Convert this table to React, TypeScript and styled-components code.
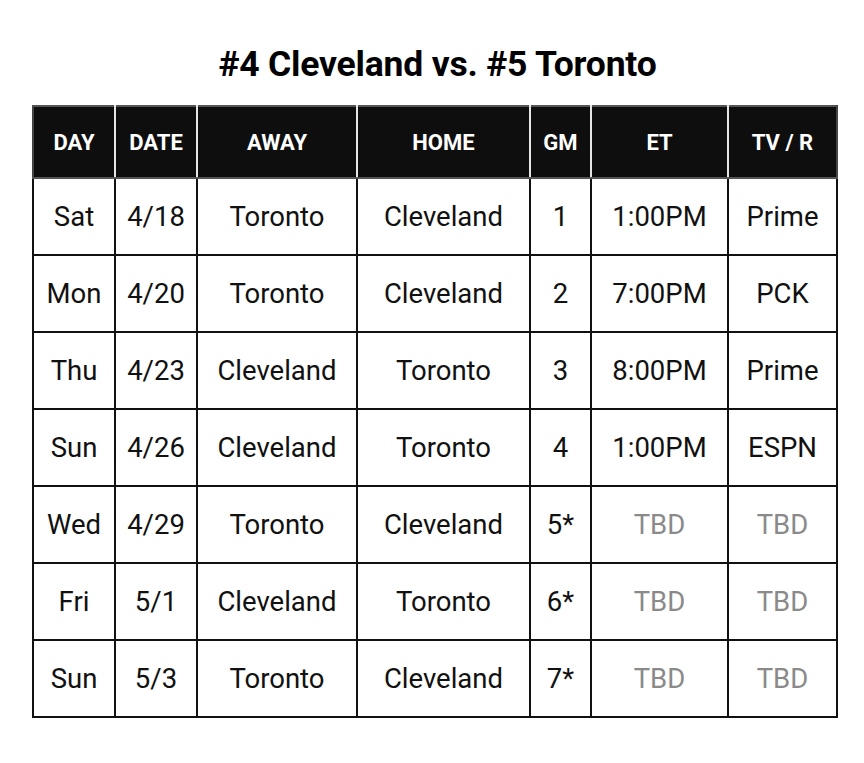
import React from 'react'
import styled, { createGlobalStyle } from 'styled-components'

const games = [
    { day: 'Sat', date: '4/18', away: 'Toronto', home: 'Cleveland', gm: '1', et: '1:00PM', tv: 'Prime' },
    { day: 'Mon', date: '4/20', away: 'Toronto', home: 'Cleveland', gm: '2', et: '7:00PM', tv: 'PCK' },
    { day: 'Thu', date: '4/23', away: 'Cleveland', home: 'Toronto', gm: '3', et: '8:00PM', tv: 'Prime' },
    { day: 'Sun', date: '4/26', away: 'Cleveland', home: 'Toronto', gm: '4', et: '1:00PM', tv: 'ESPN' },
    { day: 'Wed', date: '4/29', away: 'Toronto', home: 'Cleveland', gm: '5*', et: 'TBD', tv: 'TBD' },
    { day: 'Fri', date: '5/1', away: 'Cleveland', home: 'Toronto', gm: '6*', et: 'TBD', tv: 'TBD' },
    { day: 'Sun', date: '5/3', away: 'Toronto', home: 'Cleveland', gm: '7*', et: 'TBD', tv: 'TBD' },
]

const columns = [
    { label: 'DAY', width: 82 },
    { label: 'DATE', width: 82 },
    { label: 'AWAY', width: 160 },
    { label: 'HOME', width: 173 },
    { label: 'GM', width: 61 },
    { label: 'ET', width: 137 },
    { label: 'TV / R', width: 109 },
]

export default function App() {
    return (
        <Page>
            <GlobalStyle />
            <Title>#4 Cleveland vs. #5 Toronto</Title>
            <Schedule>
                <colgroup>
                    {columns.map((c) => (
                        <col key={c.label} style={{ width: c.width }} />
                    ))}
                </colgroup>
                <thead>
                    <tr>
                        {columns.map((c) => (
                            <HeadCell key={c.label}>{c.label}</HeadCell>
                        ))}
                    </tr>
                </thead>
                <tbody>
                    {games.map((g) => (
                        <tr key={g.gm}>
                            <Cell>{g.day}</Cell>
                            <Cell>{g.date}</Cell>
                            <Cell>{g.away}</Cell>
                            <Cell>{g.home}</Cell>
                            <Cell>{g.gm}</Cell>
                            <Cell $muted={g.et === 'TBD'}>{g.et}</Cell>
                            <Cell $muted={g.tv === 'TBD'}>{g.tv}</Cell>
                        </tr>
                    ))}
                </tbody>
            </Schedule>
        </Page>
    )
}

const GlobalStyle = createGlobalStyle`
    body {
        margin: 0;
        background: #fff;
        font-family: Roboto, "Liberation Sans", sans-serif;
    }
`

const Page = styled.div`
    width: 864px;
    height: 763px;
    box-sizing: border-box;
    padding: 44px 27px 0 33px;
    display: flex;
    flex-direction: column;
    align-items: center;
`

const Title = styled.h1`
    margin: 0 0 21px;
    padding-left: 5px;
    font-size: 35.5px;
    line-height: 40px;
    font-weight: 700;
    color: #000;
    letter-spacing: -0.2px;
`

const Schedule = styled.table`
    width: 804px;
    table-layout: fixed;
    border-collapse: collapse;
`

const HeadCell = styled.th`
    height: 70px;
    padding: 0;
    background: #0e0e0e;
    color: #fff;
    font-size: 22px;
    font-weight: 700;
    text-align: center;
    border: 2px solid #555;
    border-left-color: #e6e6e6;
    border-right-color: #e6e6e6;
    &:first-child {
        border-left-color: #444;
    }
    &:last-child {
        border-right-color: #444;
    }
`

const Cell = styled.td<{ $muted?: boolean }>`
    height: 75px;
    padding: 0;
    text-align: center;
    font-size: 27.5px;
    font-weight: 400;
    color: ${(p) => (p.$muted ? '#8a8a8a' : '#111')};
    border: 2px solid #111;
`
